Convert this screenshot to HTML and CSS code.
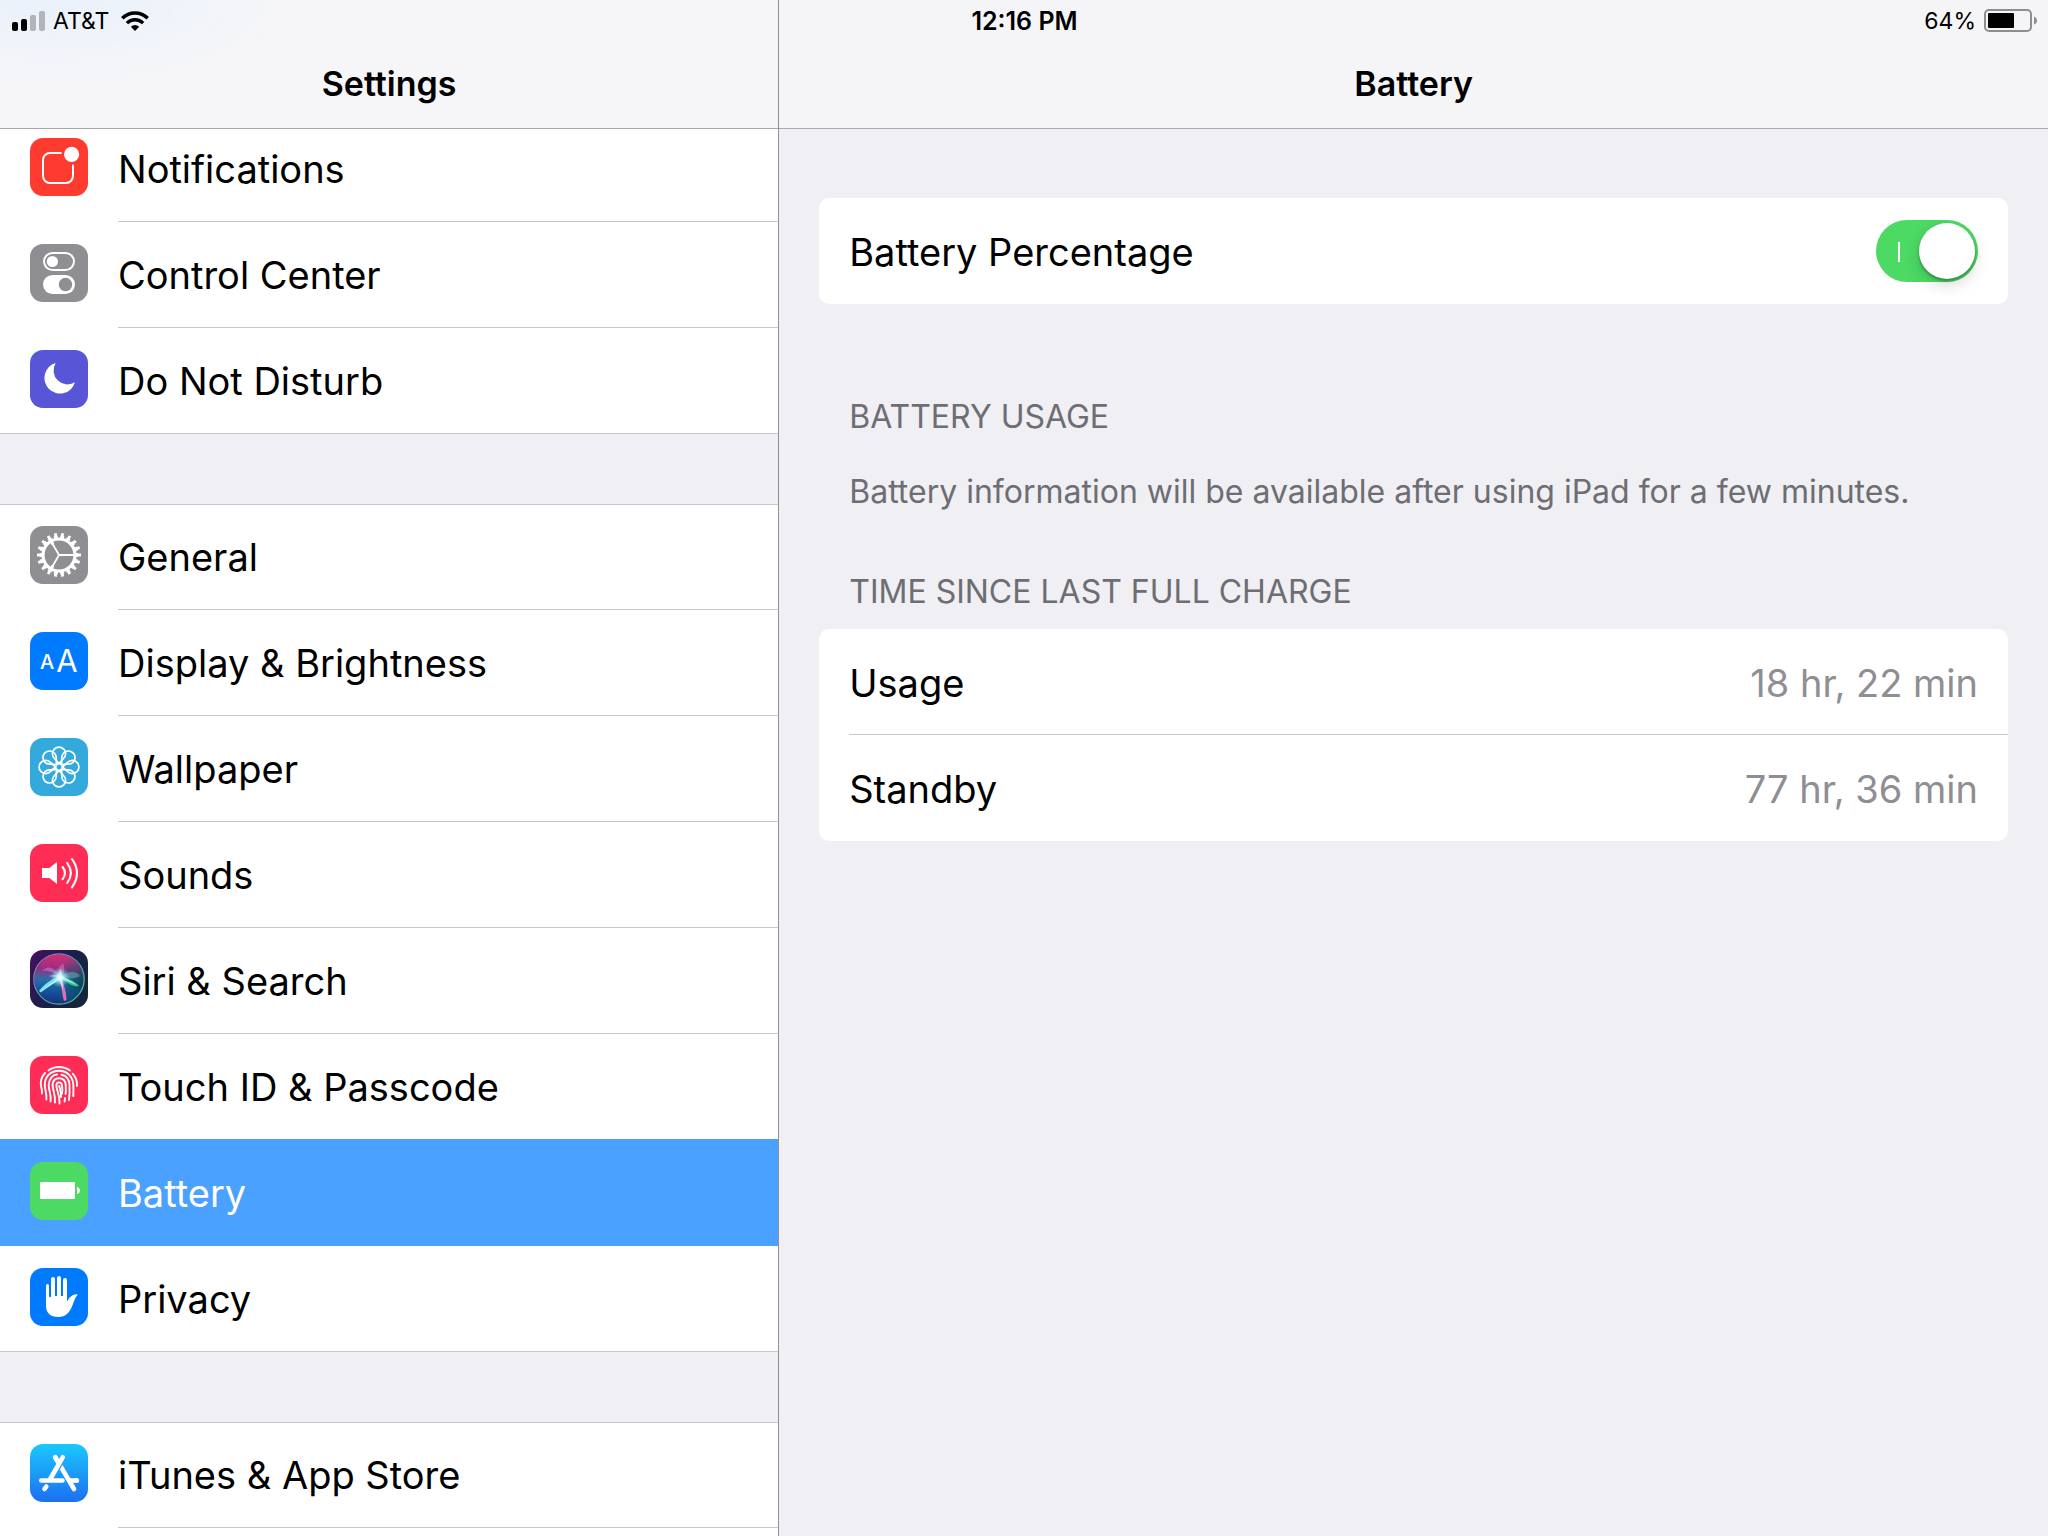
FILE: index.html
```html
<!DOCTYPE html>
<html lang="en">
<head>
<meta charset="utf-8">
<meta name="viewport" content="width=device-width, initial-scale=1">
<title>Settings</title>
<link rel="stylesheet" href="styles.css">
</head>
<body>
<div class="status-bar">
  <div class="status-left">
    <svg class="signal" viewBox="0 0 33 20" role="img" aria-label="Signal strength">
      <rect x="0" y="11" width="6" height="9" rx="2"/>
      <rect x="9" y="8" width="6" height="12" rx="2"/>
      <rect class="signal-off" x="18" y="4" width="6" height="16" rx="2"/>
      <rect class="signal-off" x="27" y="0" width="6" height="20" rx="2"/>
    </svg>
    <span class="carrier">AT&amp;T</span>
    <svg class="wifi" viewBox="0 0 28 20" role="img" aria-label="Wi-Fi">
      <path d="M1.300 7.300A18 18 0 0 1 26.700 7.300" fill="none" stroke="#000" stroke-width="3.600"/>
      <path d="M5.900 12.100A11.500 11.500 0 0 1 22.100 12.100" fill="none" stroke="#000" stroke-width="3.400"/>
      <path d="M9.800 15.700A6.500 6.500 0 0 1 18.200 15.700L14 20Z"/>
    </svg>
  </div>
  <time class="clock">12:16 PM</time>
  <div class="status-right">
    <span>64%</span>
    <svg class="charge" viewBox="0 0 53 23" role="img" aria-label="Battery level">
      <rect x="1" y="1" width="46" height="21" rx="4" fill="none" stroke="#8e8e91" stroke-width="2"/>
      <rect x="4" y="4" width="26" height="15" rx="1"/>
      <path d="M50 7.500C52 8 53 10 53 11.500S52 15 50 15.500Z" fill="#8e8e91"/>
    </svg>
  </div>
</div>

<div class="split">
  <aside class="sidebar">
    <header class="bar bar-sidebar"><h1 class="bar-title">Settings</h1></header>
    <nav class="menu" aria-label="Settings">
      <ul class="group">
        <li><a class="item" href="#notifications">
          <svg class="icon" viewBox="0 0 58 58" aria-hidden="true">
            <rect width="58" height="58" rx="13" fill="#ff3b30"/>
            <path d="M31.500 15H20a7 7 0 0 0-7 7V38a7 7 0 0 0 7 7H36a7 7 0 0 0 7-7V26.500" fill="none" stroke="#fff" stroke-width="2"/>
            <circle cx="41.600" cy="16.400" r="7.600" fill="#fff"/>
          </svg><span class="label">Notifications</span></a></li>
        <li><a class="item" href="#control-center">
          <svg class="icon" viewBox="0 0 58 58" aria-hidden="true">
            <rect width="58" height="58" rx="13" fill="#8e8e93"/>
            <rect x="14" y="9" width="30" height="17" rx="8.500" fill="none" stroke="#fff" stroke-width="2"/>
            <circle cx="22.400" cy="17.500" r="5.600" fill="#fff"/>
            <rect x="13" y="31" width="32" height="19" rx="9.500" fill="#fff"/>
            <circle cx="35.500" cy="40.500" r="6.700" fill="#8e8e93"/>
          </svg><span class="label">Control Center</span></a></li>
        <li><a class="item" href="#do-not-disturb">
          <svg class="icon" viewBox="0 0 58 58" aria-hidden="true">
            <rect width="58" height="58" rx="13" fill="#5856d6"/>
            <path d="M25.700 13A15.600 15.600 0 1 0 45 32.300A14 14 0 0 1 25.700 13Z" fill="#fff"/>
          </svg><span class="label">Do Not Disturb</span></a></li>
      </ul>
      <ul class="group">
        <li><a class="item" href="#general">
          <svg class="icon" viewBox="0 0 58 58" aria-hidden="true">
            <rect width="58" height="58" rx="13" fill="#8e8e93"/>
            <g fill="none" stroke="#fff">
              <circle cx="29" cy="29" r="16" stroke-width="3.200"/>
              <circle cx="29" cy="29" r="18" stroke-width="3" pathLength="36" stroke-dasharray="1.250 .75" stroke-dashoffset=".625"/>
              <circle cx="29" cy="29" r="20.200" stroke-width="3.600" pathLength="36" stroke-dasharray=".8 1.200" stroke-dashoffset=".4"/>
              <path d="M29 29H44M29 29L21.500 16M29 29L21.500 42" stroke-width="1.800"/>
              <path d="M23 18.600L21 15.100M23 39.400L21 42.900" stroke-width="3"/>
            </g>
          </svg><span class="label">General</span></a></li>
        <li><a class="item" href="#display">
          <svg class="icon" viewBox="0 0 58 58" aria-hidden="true">
            <rect width="58" height="58" rx="13" fill="#007aff"/>
            <text class="glyph-small" x="17" y="37">A</text>
            <text class="glyph-large" x="37" y="40">A</text>
          </svg><span class="label">Display &amp; Brightness</span></a></li>
        <li><a class="item" href="#wallpaper">
          <svg class="icon" viewBox="0 0 58 58" aria-hidden="true">
            <defs><path id="petal" d="M29 25.500L24.500 20.500A6.600 6.600 0 1 1 33.500 20.500Z"/></defs>
            <rect width="58" height="58" rx="13" fill="#34aadc"/>
            <g fill="none" stroke="#fff" stroke-width="1.700">
              <use href="#petal"/>
              <use href="#petal" transform="rotate(45 29 29)"/>
              <use href="#petal" transform="rotate(90 29 29)"/>
              <use href="#petal" transform="rotate(135 29 29)"/>
              <use href="#petal" transform="rotate(180 29 29)"/>
              <use href="#petal" transform="rotate(225 29 29)"/>
              <use href="#petal" transform="rotate(270 29 29)"/>
              <use href="#petal" transform="rotate(315 29 29)"/>
              <circle cx="29" cy="29" r="3.400"/>
            </g>
          </svg><span class="label">Wallpaper</span></a></li>
        <li><a class="item" href="#sounds">
          <svg class="icon" viewBox="0 0 58 58" aria-hidden="true">
            <rect width="58" height="58" rx="13" fill="#ff2d55"/>
            <path d="M12 24H19.300L27 18V40L19.300 34H12Z" fill="#fff"/>
            <path d="M32.600 23Q37.400 29 32.600 35.200M37.200 19Q44.600 29 37.200 39M42 15Q52 29 42 43.400" fill="none" stroke="#fff" stroke-width="2.100" stroke-linecap="round"/>
          </svg><span class="label">Sounds</span></a></li>
        <li><a class="item" href="#siri">
          <svg class="icon" viewBox="0 0 58 58" aria-hidden="true">
            <defs>
              <linearGradient id="siri-bg" x1="0" y1="0" x2="1" y2=".6"><stop offset="0" stop-color="#46105c"/><stop offset=".55" stop-color="#1b1f4a"/><stop offset="1" stop-color="#15263c"/></linearGradient>
              <linearGradient id="siri-orb" x1=".5" y1="0" x2=".45" y2="1"><stop offset="0" stop-color="#d92a76"/><stop offset=".3" stop-color="#96307f"/><stop offset=".52" stop-color="#2b6fa8"/><stop offset=".75" stop-color="#1553a0"/><stop offset="1" stop-color="#17307a"/></linearGradient>
              <radialGradient id="siri-side" cx="1" cy=".6" r=".65"><stop offset="0" stop-color="#0b3a4a" stop-opacity=".95"/><stop offset="1" stop-color="#0b6a78" stop-opacity="0"/></radialGradient>
              <radialGradient id="siri-glow"><stop offset="0" stop-color="#fff"/><stop offset=".35" stop-color="#c9faff" stop-opacity=".8"/><stop offset="1" stop-color="#6fd8f0" stop-opacity="0"/></radialGradient>
              <linearGradient id="siri-ring" x1="0" y1="0" x2="1" y2="1"><stop offset="0" stop-color="#b06cc0"/><stop offset=".5" stop-color="#5aa0b8"/><stop offset="1" stop-color="#58c49c"/></linearGradient>
            </defs>
            <rect width="58" height="58" rx="13" fill="url(#siri-bg)"/>
            <circle cx="29" cy="29" r="24.500" fill="url(#siri-orb)"/>
            <circle cx="29" cy="29" r="24.500" fill="url(#siri-side)"/>
            <path d="M30 27C24 15 16 16 12.500 21C17 20 25 22 30 27Z" fill="#e07be0" opacity=".5"/>
            <path d="M30 27C25 24 28 17 33 13C35 18 35 23 30 27Z" fill="#ff86c4" opacity=".4"/>
            <path d="M30 27C38 21 46 20 50 26C46 29 38 29 30 27Z" fill="#6fb8b8" opacity=".5"/>
            <path d="M32 27C38 28 45 31 49 36C45 38 37 33 32 29Z" fill="#2fe0a0" opacity=".8"/>
            <path d="M28 27C22 29 14 34 9 41L11 42.500C17 37 24 33 31 29Z" fill="#7df1ff" opacity=".9"/>
            <path d="M29 28C32 36 32 44 34 51L36.500 50C36.500 43 34 34 31 27Z" fill="#ff6fb8" opacity=".9"/>
            <path d="M29.500 27L10 42L29 30L33 40L32 29L48 35.500L32 26L31 19L28 25L18 26Z" fill="#eaffff" opacity=".75"/>
            <circle cx="30" cy="27.500" r="10" fill="url(#siri-glow)"/>
            <circle cx="29" cy="29" r="25.200" fill="none" stroke="url(#siri-ring)" stroke-width="1.200"/>
          </svg><span class="label">Siri &amp; Search</span></a></li>
        <li><a class="item" href="#passcode">
          <svg class="icon" viewBox="0 0 58 58" aria-hidden="true">
            <rect width="58" height="58" rx="13" fill="#ff2d55"/>
            <g fill="none" stroke="#fff" stroke-width="1.900" stroke-linecap="round">
              <path d="M18.500 14.500C24.500 9.800 33.500 9.800 40 14.500"/>
              <path d="M15 17C11.500 21 10 26.500 11.200 31Q12.200 34 12 37.500"/>
              <path d="M42.700 17.700C45.700 21 47.300 25.500 47 30"/>
              <path d="M16.400 43.500C17 37 14.800 34 14.800 29C14.800 20 21 14.700 29 14.700C37 14.700 42.800 20.500 43.300 28.500Q43.600 34 43.300 40"/>
              <path d="M20.600 45.500C21.500 38 18.500 34 18.700 29C19 22 23.500 18.500 27 18.500M31.500 18.700C36.500 19.700 39.300 24 39.500 29Q39.900 37 39 44"/>
              <path d="M25 46.500C25.600 38 22.500 34 22.600 29C22.800 24.500 25.500 22.300 29 22.300C33 22.300 35.500 25 35.700 29C36 33 36 35.500 35.600 38M35 42L34.600 45.500"/>
              <path d="M29.500 47.500C30 40 26.400 34 26.400 29.500C26.400 25.300 31.500 25.300 32 29.500C32.500 33 32.500 35 32 37.500"/>
              <path d="M29.200 30C30.200 34 31.500 37 31 41"/>
            </g>
          </svg><span class="label">Touch ID &amp; Passcode</span></a></li>
        <li><a class="item item-current" href="#battery" aria-current="page">
          <svg class="icon" viewBox="0 0 58 58" aria-hidden="true">
            <rect width="58" height="58" rx="13" fill="#4cd964"/>
            <rect x="10" y="20" width="35" height="17" rx="1" fill="#fff"/>
            <path d="M47 25C49 25.500 50 27 50 28.500S49 31.500 47 32Z" fill="#fff"/>
          </svg><span class="label">Battery</span></a></li>
        <li><a class="item" href="#privacy">
          <svg class="icon" viewBox="0 0 58 58" aria-hidden="true">
            <rect width="58" height="58" rx="13" fill="#007aff"/>
            <path d="M16 17.500a1.500 1.500 0 0 1 3 0V28.500Q20 30 21 28.500V11a2 2 0 0 1 4 0V28H27V10a2 2 0 0 1 4 0V28H33V12a2 2 0 0 1 4 0V33.500C39 31 41 26 47.300 26.300Q47.800 27 46.800 28C42.500 32 42.500 49 28.500 49C20 49 16 44.500 16 38Z" fill="#fff"/>
          </svg><span class="label">Privacy</span></a></li>
      </ul>
      <ul class="group">
        <li><a class="item" href="#app-store">
          <svg class="icon" viewBox="0 0 58 58" aria-hidden="true">
            <defs><linearGradient id="store-bg" x1="0" y1="0" x2="0" y2="1"><stop offset="0" stop-color="#1ac8fc"/><stop offset="1" stop-color="#1d6ff2"/></linearGradient></defs>
            <rect width="58" height="58" rx="13" fill="url(#store-bg)"/>
            <g fill="none" stroke="#fff" stroke-width="4.600" stroke-linecap="round">
              <path d="M25.200 13.200L44 45"/>
              <path d="M45 36.500H46.800"/>
              <path d="M16.300 42.500L14.500 45"/>
              <path d="M33 13.200L20.500 34.500" stroke="#1ea5f8" stroke-width="7" stroke-linecap="butt"/>
              <path d="M32.800 13.200L20.500 34.500"/>
              <path d="M25.200 13.200L29 19.500"/>
              <path d="M11.300 36.500H32.500M40 36.500H46.800"/>
            </g>
          </svg><span class="label">iTunes &amp; App Store</span></a></li>
      </ul>
    </nav>
  </aside>

  <main class="detail">
    <header class="bar"><h2 class="bar-title">Battery</h2></header>
    <div class="content">
      <div class="card">
        <div class="row">
          <label for="percentage">Battery Percentage</label>
          <input class="switch" type="checkbox" role="switch" id="percentage" checked>
        </div>
      </div>
      <section class="usage">
        <h3 class="section-title">BATTERY USAGE</h3>
        <p class="note">Battery information will be available after using iPad for a few minutes.</p>
      </section>
      <section class="since">
        <h3 class="section-title">TIME SINCE LAST FULL CHARGE</h3>
        <dl class="card">
          <div class="row"><dt>Usage</dt><dd class="value">18 hr, 22 min</dd></div>
          <div class="row"><dt>Standby</dt><dd class="value">77 hr, 36 min</dd></div>
        </dl>
      </section>
    </div>
  </main>
</div>
</body>
</html>
```
FILE: styles.css
```css
* {
  box-sizing: border-box;
}

body,
h1,
h2,
h3,
p,
ul,
dl,
dd {
  margin: 0;
  padding: 0;
}

body {
  position: relative;
  background: #efeff4;
  color: #000;
  font-family: Inter, "Liberation Sans", sans-serif;
  font-size: 38px;
  line-height: 48px;
}

ul {
  list-style: none;
}

svg {
  display: block;
  flex: none;
}

/* Status bar, laid over both navigation bars */
.status-bar {
  position: absolute;
  top: 0;
  left: 0;
  right: 0;
  z-index: 2;
  display: grid;
  grid-template-columns: 1fr auto 1fr;
  align-items: center;
  height: 41px;
  padding: 0 11px 0 12px;
  font-size: 23px;
  line-height: 32px;
}

.status-left,
.status-right {
  display: flex;
  align-items: center;
  gap: 8px;
}

.status-right {
  justify-content: flex-end;
}

.signal {
  width: 33px;
  height: 20px;
}

.signal-off {
  fill: #b1b5b9;
}

.wifi {
  width: 28px;
  height: 20px;
  margin-left: 4px;
}

.charge {
  width: 53px;
  height: 23px;
}

.clock {
  font-size: 25px;
  font-weight: 600;
}

/* Two panes */
.split {
  display: flex;
  height: 100vh;
}

.sidebar {
  display: flex;
  flex-direction: column;
  flex: none;
  width: calc(38% + 1px);
  border-right: 1px solid #8f8f94;
}

.detail {
  flex: 1;
  min-width: 0;
}

.bar {
  position: relative;
  flex: none;
  height: 129px;
  padding-top: 40px;
  border-bottom: 1px solid #a9a9ae;
  background: #f5f5f7;
}

.bar-sidebar {
  z-index: 1;
  background: radial-gradient(ellipse 240px 90px at 50px 0, #e9f1fb, #f6f6f700), #f6f6f8;
}

.bar-title {
  font-size: 34px;
  font-weight: 600;
  line-height: 88px;
  text-align: center;
}

/* Sidebar list */
.menu {
  display: flex;
  flex-direction: column;
  flex: 1;
  gap: 70px;
  min-height: 0;
  margin-top: -13px;
  overflow: hidden;
}

.group {
  flex: none;
  background: #fff;
  box-shadow: inset 0 1px #c8c7cc;
}

.group:last-child {
  flex: 1 0 auto;
}

.item {
  display: flex;
  align-items: center;
  gap: 30px;
  height: 106px;
  padding-left: 30px;
  color: inherit;
  text-decoration: none;
}

.icon {
  width: 58px;
  height: 58px;
  margin-bottom: 4px;
}

.label {
  flex: 1;
  padding-top: 2px;
  line-height: 103px;
  border-bottom: 1px solid #c8c7cc;
}

.group:not(:last-child) li:last-child .item {
  box-shadow: inset 0 -1px #c8c7cc;
}

.item-current {
  position: relative;
  background: #4ba1ff;
  box-shadow: 0 -1px #4ba1ff;
  color: #fff;
}

.item-current .label {
  border-color: transparent;
}

.glyph-small,
.glyph-large {
  fill: #fff;
  text-anchor: middle;
}

.glyph-small {
  font-size: 20px;
  font-weight: 500;
}

.glyph-large {
  font-size: 31px;
  font-weight: 400;
}

/* Detail pane */
.content {
  padding: 69px 40px;
}

.card {
  border-radius: 10px;
  background: #fff;
}

.row {
  display: flex;
  align-items: center;
  justify-content: space-between;
  height: 106px;
  margin-left: 30px;
  padding-right: 30px;
}

.row label,
.row dt,
.row dd {
  padding-top: 2px;
}

.row + .row {
  box-shadow: 0 -1px #c8c7cc;
}

.value {
  color: #8e8e93;
}

.usage {
  margin-top: 93px;
}

.since {
  margin-top: 60px;
}

.section-title,
.note {
  padding: 0 30px;
  color: #6d6d72;
  font-size: 32px;
  font-weight: 400;
  line-height: 40px;
}

.note {
  margin-top: 35px;
}

.since .card {
  margin-top: 17px;
}

.switch {
  appearance: none;
  position: relative;
  width: 102px;
  height: 62px;
  margin: 0;
  border-radius: 31px;
  background: #e5e5ea;
}

.switch:checked {
  background: #4cd964;
}

.switch::before {
  content: "";
  position: absolute;
  top: 22px;
  left: 22px;
  width: 2px;
  height: 20px;
  background: #fff;
}

.switch::after {
  content: "";
  position: absolute;
  top: 3px;
  left: 3px;
  width: 56px;
  height: 56px;
  border-radius: 50%;
  background: #fff;
  box-shadow: 0 6px 16px rgba(0, 0, 0, .15), 0 2px 3px rgba(0, 0, 0, .3);
}

.switch:checked::after {
  left: 43px;
}
```
